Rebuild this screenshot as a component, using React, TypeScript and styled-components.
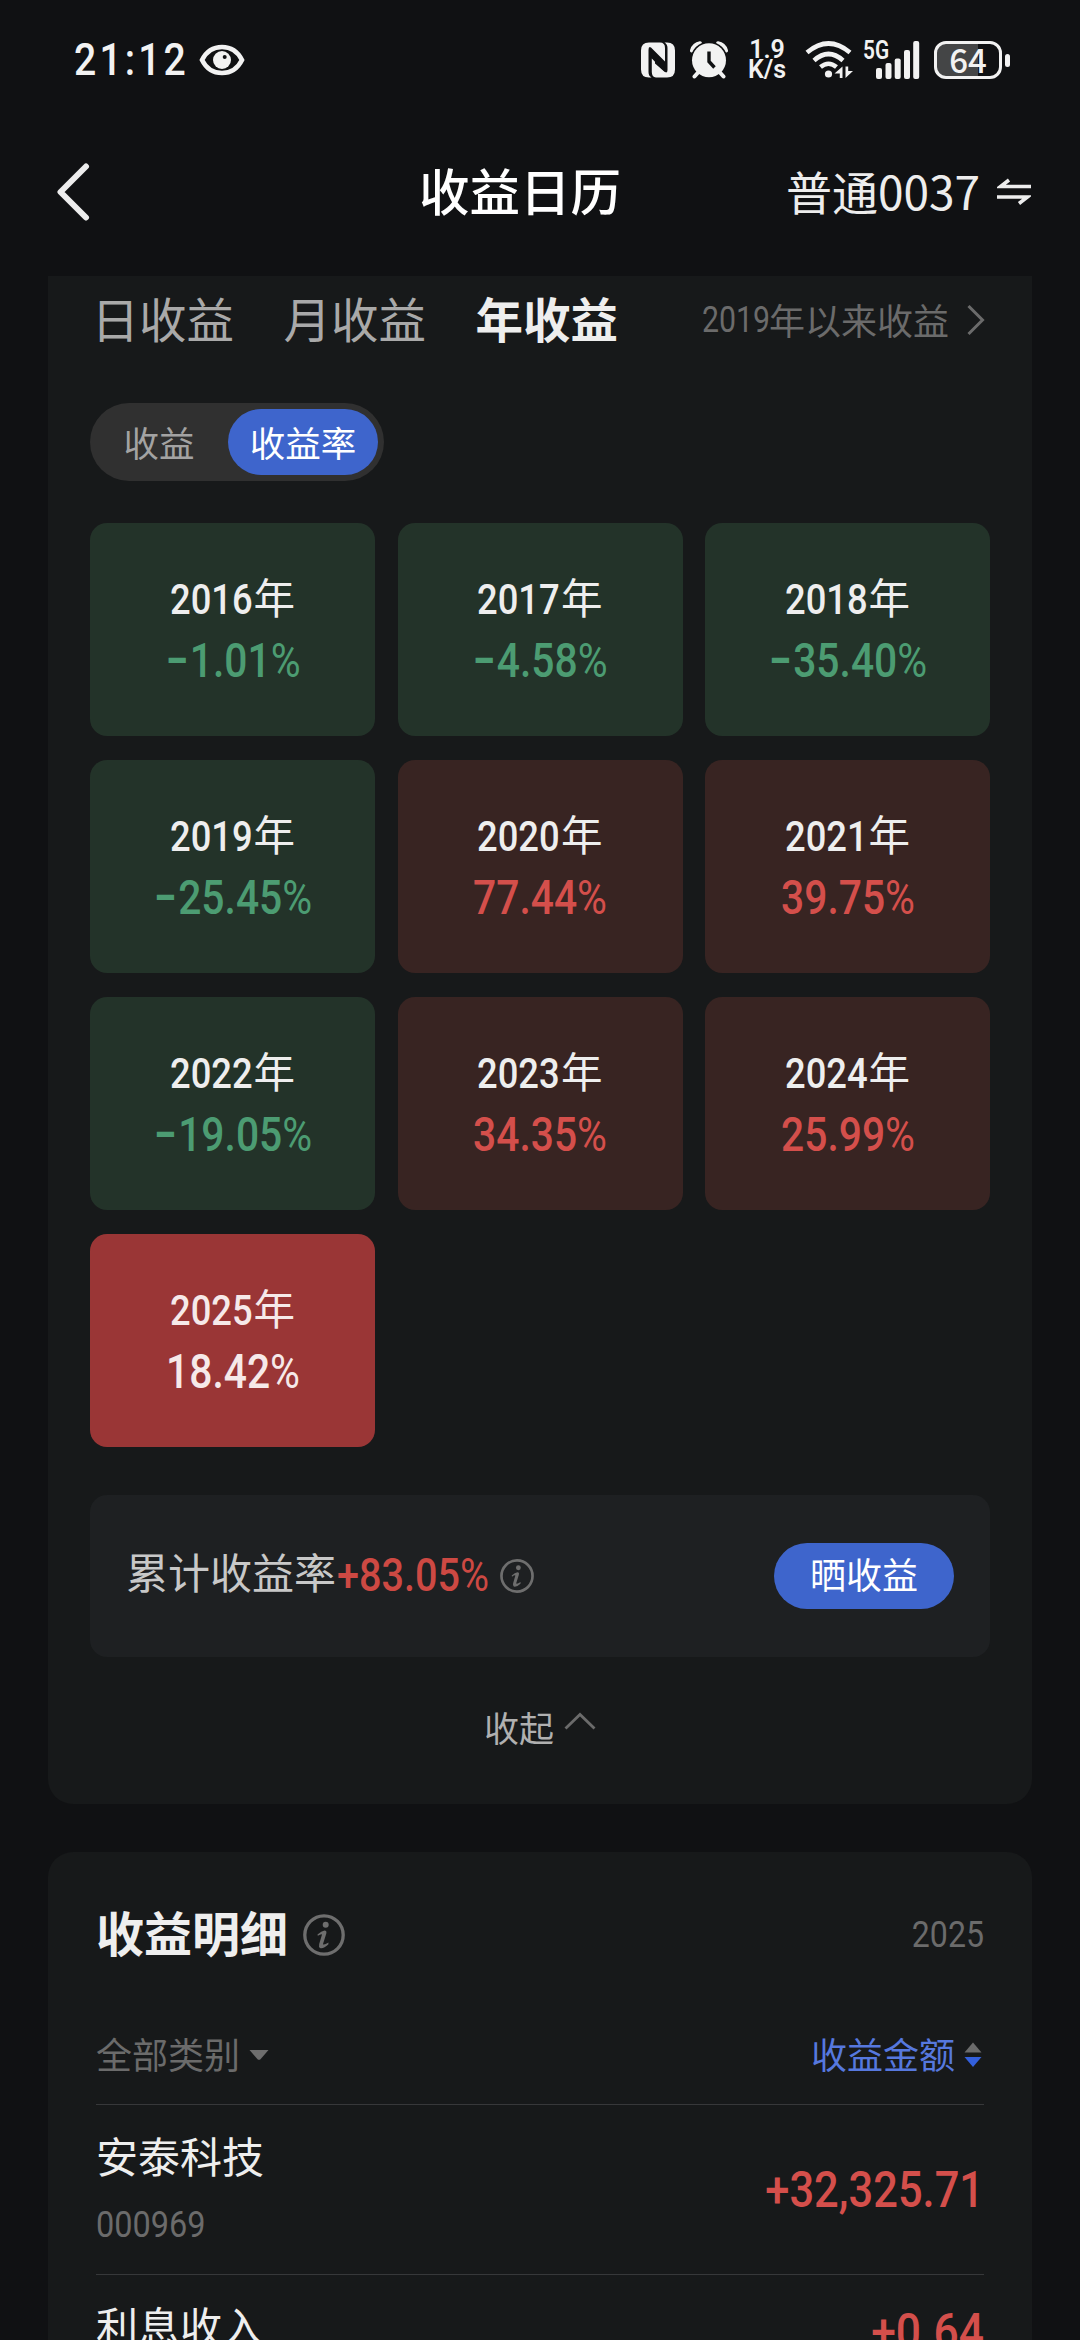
import React from "react";
import styled, { createGlobalStyle } from "styled-components";

const cjk = `"Noto Sans CJK SC", "Noto Sans", sans-serif`;
const numeric = `Roboto, "Noto Sans CJK SC", sans-serif`;

const GlobalStyle = createGlobalStyle`
  * { box-sizing: border-box; }
  html, body { margin: 0; padding: 0; background: #101113; }
  body { font-family: ${cjk}; color: #eee; }
  svg { display: block; flex: none; }
`;

const Screen = styled.div`
  width: 1080px;
  height: 2340px;
  overflow: hidden;
  background: #101113;
  display: flex;
  flex-direction: column;
`;

/* condensed numerals: glyphs are squeezed, the box keeps the final width */
const Num = styled.span<{ $size: number; $w: number; $scale?: number; $weight?: number; $from?: string }>`
  display: flex;
  flex: none;
  justify-content: ${(p) => (p.$from === "right" ? "flex-end" : p.$from === "center" ? "center" : "flex-start")};
  width: ${(p) => p.$w}px;
  height: 1.2em;
  line-height: 1.2;
  font-family: ${numeric};
  font-size: ${(p) => p.$size}px;
  font-weight: ${(p) => p.$weight ?? 500};
  white-space: nowrap;
  transform: scaleX(${(p) => p.$scale ?? 0.85});
  transform-origin: ${(p) => p.$from ?? "left"} center;
`;

const Thin = styled.span`
  font-weight: 400;
`;
const Minus = styled.span`
  font-weight: 700;
  margin-right: 2px;
`;

/* ---------- status bar ---------- */
const StatusBar = styled.div`
  height: 120px;
  flex: none;
  padding: 0 70px 0 74px;
  display: flex;
  align-items: center;
  color: #f2f2f2;
`;
const Time = styled.div`
  width: 125px;
  letter-spacing: 3.6px;
`;
const Tray = styled.div`
  margin-left: auto;
  display: flex;
  align-items: center;
`;
const AlarmSlot = styled.span`
  margin-left: 15px;
`;
const Speed = styled.div`
  width: 40px;
  margin: 0 18px 0 19px;
  font-family: ${numeric};
  font-size: 25px;
  font-weight: 600;
  line-height: 20px;
  text-align: center;
`;
const Cell = styled.div`
  position: relative;
  width: 58px;
  height: 38px;
  margin: 0 13px 0 10px;
`;
const Gen = styled.span`
  position: absolute;
  left: 0;
  top: -1px;
  font-family: ${numeric};
  font-size: 26px;
  line-height: 20px;
  font-weight: 600;
  transform: scaleX(0.8);
  transform-origin: left;
`;
const Battery = styled.div`
  width: 68px;
  height: 38px;
  border: 3px solid #f2f2f2;
  border-radius: 12px;
  background: linear-gradient(to right, #444546 41px, #101113 41px);
  display: flex;
  align-items: center;
  justify-content: center;
  font-size: 33px;
  line-height: 30px;
  padding-bottom: 2px;
  font-weight: 500;
`;
const BatteryTip = styled.div`
  width: 5px;
  height: 13px;
  margin-left: 3px;
  border-radius: 3px;
  background: #f2f2f2;
`;

/* ---------- header ---------- */
const Header = styled.header`
  height: 156px;
  flex: none;
  padding: 0 49px 12px 56px;
  display: grid;
  grid-template-columns: 363px 200px 1fr;
  align-items: center;
`;
const Title = styled.h1`
  margin: 0;
  padding-bottom: 7px;
  font-size: 50.5px;
  font-weight: 500;
  line-height: 60px;
  color: #fff;
  white-space: nowrap;
`;
const Account = styled.div`
  display: flex;
  align-items: center;
  justify-content: flex-end;
  gap: 17px;
  font-size: 46px;
  font-weight: 400;
  color: #ededed;
`;
const AccountName = styled.span`
  padding-bottom: 4px;
  line-height: 60px;
`;

/* ---------- cards ---------- */
const Card = styled.section<{ $first?: boolean }>`
  flex: none;
  width: 984px;
  margin: 0 48px;
  background: #17191a;
  border-radius: ${(p) => (p.$first ? "0 0 25px 25px" : "25px 25px 0 0")};
  height: ${(p) => (p.$first ? 1528 : 560)}px;
  margin-bottom: ${(p) => (p.$first ? 48 : 0)}px;
  padding: ${(p) => (p.$first ? "0 42px" : "0 48px")};
  display: flex;
  flex-direction: column;
`;

const Tabs = styled.nav`
  height: 87px;
  flex: none;
  display: flex;
  align-items: center;
  gap: 49.5px;
  padding-left: 1.5px;
`;
const Tab = styled.span<{ $active?: boolean }>`
  padding-bottom: 3px;
  font-size: 47.5px;
  line-height: 60px;
  font-weight: ${(p) => (p.$active ? 700 : 400)};
  color: ${(p) => (p.$active ? "#eeeeee" : "#a9a9a9")};
`;
const Since = styled.span`
  margin-left: auto;
  padding-right: 5px;
  display: flex;
  align-items: center;
  font-size: 36px;
  line-height: 50px;
  color: #6b6b6b;
`;
const SinceText = styled.span`
  margin-right: 17px;
  padding-bottom: 2px;
`;

const Segment = styled.div`
  width: 294px;
  height: 78px;
  flex: none;
  margin-top: 40px;
  border-radius: 39px;
  background: #303030;
  padding: 6px;
  display: flex;
`;
const SegmentItem = styled.span<{ $active?: boolean }>`
  width: ${(p) => (p.$active ? 150 : 132)}px;
  height: 66px;
  border-radius: 33px;
  display: flex;
  align-items: center;
  justify-content: center;
  font-size: 35.5px;
  line-height: 50px;
  padding-right: ${(p) => (p.$active ? 0 : 6)}px;
  background: ${(p) => (p.$active ? "#3e65cc" : "transparent")};
  color: ${(p) => (p.$active ? "#fff" : "#a3a3a3")};
`;

const YearGrid = styled.div`
  margin-top: 42px;
  display: grid;
  grid-template-columns: repeat(3, 285px);
  grid-auto-rows: 213px;
  gap: 24px 22.5px;
`;
type Tone = "down" | "up" | "current";
const tones: Record<Tone, { bg: string; label: string; value: string }> = {
  down: { bg: "#233329", label: "#eeeeee", value: "#4c9c72" },
  up: { bg: "#382422", label: "#eeeeee", value: "#d44f4b" },
  current: { bg: "#9a3636", label: "#f6e9e9", value: "#f6e9e9" },
};
const YearCell = styled.div<{ $tone: Tone }>`
  border-radius: 17px;
  background: ${(p) => tones[p.$tone].bg};
  color: ${(p) => tones[p.$tone].value};
  display: flex;
  flex-direction: column;
  align-items: center;
  padding-top: 45px;
`;
const YearLabel = styled.div<{ $tone: Tone }>`
  height: 64px;
  display: flex;
  align-items: center;
  font-size: 41.5px;
  line-height: 58px;
  color: ${(p) => tones[p.$tone].label};
`;
const YearUnit = styled.span`
  padding-bottom: 8px;
`;

const Summary = styled.div`
  margin-top: 48px;
  height: 162px;
  flex: none;
  border-radius: 17px;
  background: #1e2022;
  padding: 0 36px 0 36px;
  display: flex;
  align-items: center;
`;
const SummaryLabel = styled.span`
  font-size: 42px;
  line-height: 60px;
  color: #c8c8c8;
  padding-bottom: 10px;
`;
const SummaryValue = styled.span`
  color: #cd4943;
  margin: 0 10px 0 1px;
`;
const ShareButton = styled.button`
  margin-left: auto;
  width: 180px;
  height: 66px;
  border: 0;
  border-radius: 33px;
  background: #3e65cc;
  color: #fff;
  font-family: ${cjk};
  font-size: 36px;
  line-height: 50px;
  padding: 0 0 6px;
`;
const Collapse = styled.div`
  margin-top: 45px;
  height: 50px;
  padding-left: 394px;
  display: flex;
  font-size: 35px;
  line-height: 50px;
  color: #b0b0b0;
  gap: 10px;
`;
const CollapseMark = styled.span`
  padding-top: 10px;
`;

/* ---------- detail list ---------- */
const DetailHead = styled.div`
  height: 160px;
  flex: none;
  padding-top: 6px;
  display: flex;
  align-items: center;
  color: #6b6b6b;
`;
const DetailTitle = styled.h2`
  margin: 0 15px 0 0;
  padding-bottom: 8px;
  font-size: 48px;
  line-height: 60px;
  font-weight: 700;
  color: #eeeeee;
`;
const Push = styled.span`
  margin-left: auto;
`;
const Filters = styled.div`
  height: 93px;
  flex: none;
  padding-bottom: 6px;
  display: flex;
  align-items: center;
  justify-content: space-between;
  border-bottom: 1px solid #37383a;
`;
const Filter = styled.span<{ $active?: boolean }>`
  display: flex;
  align-items: center;
  gap: ${(p) => (p.$active ? 9 : 8)}px;
  padding-right: ${(p) => (p.$active ? 2 : 0)}px;
  font-size: 36px;
  line-height: 50px;
  color: ${(p) => (p.$active ? "#5678de" : "#6b6b6b")};
`;
const FilterText = styled.span`
  padding-bottom: 5px;
`;
const Item = styled.div`
  height: 170px;
  flex: none;
  border-bottom: 1px solid #37383a;
  display: flex;
  justify-content: space-between;
`;
const ItemName = styled.div`
  padding-top: 20px;
  font-size: 42px;
  line-height: 60px;
  color: #eeeeee;
`;
const ItemCode = styled.div`
  margin-top: 18px;
  color: #6b6b6b;
  line-height: 1;
`;
const ItemAmount = styled.div<{ $top: number }>`
  padding-top: ${(p) => p.$top}px;
  color: #d44f4b;
`;

const Eye = () => (
  <svg width="46" height="32" viewBox="0 0 46 32" fill="none">
    <path d="M3 16C7 8 14 3 23 3s16 5 20 13c-4 8-11 13-20 13S7 24 3 16Z" stroke="#f2f2f2" strokeWidth="4.6" />
    <circle cx="23" cy="16" r="9" fill="#f2f2f2" />
    <circle cx="25.7" cy="13" r="2" fill="#101113" />
  </svg>
);
const Nfc = () => (
  <svg width="34" height="36" viewBox="0 0 34 36">
    <path d="M8 0.5H19Q24 0.5 24 6V19.500L10 5.500Q7.500 4 7.500 8V30Q7.500 34 10.500 35.500H8Q0 35.500 0 27.500V8.500Q0 0.500 8 0.500Z" fill="#f2f2f2" />
    <path d="M23.500 0.500H26Q34 0.500 34 8.500V27.500Q34 35.500 26 35.500H15Q10.800 35 10.800 30V16.500L24 30Q26.500 31.500 26.500 28V6Q26.500 2 23.500 0.500Z" fill="#f2f2f2" />
    <path d="M10.800 8.500L20 16.500V21.500L10.800 13.500Z" fill="#101113" />
    <path d="M14 17.500L23.800 26V30L14 21.500Z" fill="#101113" />
  </svg>
);
const Alarm = () => (
  <svg width="38" height="38" viewBox="0 0 38 38" fill="none" stroke="#f2f2f2">
    <path d="M2 9.500Q4 3 10 2.200" strokeWidth="4" strokeLinecap="round" />
    <path d="M36 9.500Q34 3 28 2.200" strokeWidth="4" strokeLinecap="round" />
    <circle cx="19" cy="19.200" r="18.500" fill="#101113" stroke="none" />
    <path d="M8.500 31L4.500 35.500M29.500 31L33.500 35.500" strokeWidth="4" strokeLinecap="round" />
    <circle cx="19" cy="19.200" r="17" fill="#f2f2f2" stroke="none" />
    <path d="M19 10.500V20.500L24.500 26.500" stroke="#101113" strokeWidth="3.400" />
  </svg>
);
const Wifi = () => (
  <svg width="48" height="38" viewBox="0 0 48 38" fill="none" stroke="#f2f2f2" strokeWidth="4.600">
    <path d="M2 11.500Q23.500 -6.500 45 11.500" />
    <path d="M9 19.500Q23.500 6.500 38 19.500" />
    <path d="M15.500 26Q23.500 19.500 31.500 26" />
    <circle cx="23.500" cy="33" r="3.600" fill="#f2f2f2" stroke="none" />
    <path d="M37.500 25.500V37H34.800V32.500H29.500ZM40.500 37V25.500H43.200V30H48Z" fill="#f2f2f2" stroke="none" />
  </svg>
);
const Bars = () => (
  <svg width="58" height="38" viewBox="0 0 58 38" fill="#f2f2f2">
    <rect x="13" y="27" width="6" height="11" rx="2" />
    <rect x="22.500" y="22" width="6" height="16" rx="2" />
    <rect x="31.700" y="17.500" width="6" height="20.500" rx="2" />
    <rect x="41" y="9" width="6" height="29" rx="2" />
    <rect x="50.200" y="0" width="6" height="38" rx="2" />
  </svg>
);
const Back = () => (
  <svg width="34" height="60" viewBox="0 0 34 60" fill="none">
    <path d="M30 4.500L4.500 30L30 55.500" stroke="#ededed" strokeWidth="6" strokeLinecap="round" strokeLinejoin="round" />
  </svg>
);
const Swap = () => (
  <svg width="34" height="28" viewBox="0 0 34 28" fill="none" stroke="#ededed" strokeWidth="3.600">
    <path d="M34 8.500H3.500L12 2" />
    <path d="M0 19H30.500L22 25.500" />
  </svg>
);
const ChevronRight = () => (
  <svg width="19" height="32" viewBox="0 0 19 32" fill="none">
    <path d="M2.500 2L16.500 16L2.500 30" stroke="#6b6b6b" strokeWidth="3" />
  </svg>
);
const ChevronUp = () => (
  <svg width="32" height="18" viewBox="0 0 32 18" fill="none">
    <path d="M1.500 16.500L16 2.500L30.500 16.500" stroke="#6b6b6b" strokeWidth="2.800" />
  </svg>
);
const Info = ({ size }: { size: number }) => (
  <svg width={size} height={size} viewBox="0 0 42 42" fill="none">
    <circle cx="21" cy="21" r="19.200" stroke="#6e6e6e" strokeWidth="3.300" />
    <circle cx="22.700" cy="10.800" r="3" fill="#6e6e6e" />
    <path d="M14.500 20.500Q18.500 17 21.500 16.500Q24 16.500 23.300 19.500L20 30Q20.500 31.500 25.500 28.500L25.300 30.500Q20.500 35 17 34Q15.500 33 16.200 30L19 20.500Q18.500 19.500 14.800 21.800Z" fill="#6e6e6e" />
  </svg>
);
const Caret = () => (
  <svg width="22" height="12" viewBox="0 0 22 12">
    <path d="M1.500 1H20.500L12.500 10.200Q11 11.500 9.500 10.200Z" fill="#6e6e6e" />
  </svg>
);
const Sort = () => (
  <svg width="18" height="26" viewBox="0 0 18 26">
    <path d="M0.500 10.500L9 0.500L17.500 10.500Z" fill="#6b6b6b" />
    <path d="M0.500 15L9 25L17.500 15Z" fill="#3360dd" />
  </svg>
);

const years: { year: string; value: number; tone: Tone }[] = [
  { year: "2016", value: -1.01, tone: "down" },
  { year: "2017", value: -4.58, tone: "down" },
  { year: "2018", value: -35.4, tone: "down" },
  { year: "2019", value: -25.45, tone: "down" },
  { year: "2020", value: 77.44, tone: "up" },
  { year: "2021", value: 39.75, tone: "up" },
  { year: "2022", value: -19.05, tone: "down" },
  { year: "2023", value: 34.35, tone: "up" },
  { year: "2024", value: 25.99, tone: "up" },
  { year: "2025", value: 18.42, tone: "current" },
];

export default function App() {
  return (
    <Screen>
      <GlobalStyle />
      <StatusBar>
        <Time>
          <Num $size={45} $w={120} $scale={0.87}>21:12</Num>
        </Time>
        <Eye />
        <Tray>
          <Nfc />
          <AlarmSlot>
            <Alarm />
          </AlarmSlot>
          <Speed>
            1.9
            <br />
            K/s
          </Speed>
          <Wifi />
          <Cell>
            <Gen>5G</Gen>
            <Bars />
          </Cell>
          <Battery>64</Battery>
          <BatteryTip />
        </Tray>
      </StatusBar>

      <Header>
        <Back />
        <Title>收益日历</Title>
        <Account>
          <AccountName>普通0037</AccountName>
          <Swap />
        </Account>
      </Header>

      <Card $first>
        <Tabs>
          <Tab>日收益</Tab>
          <Tab>月收益</Tab>
          <Tab $active>年收益</Tab>
          <Since>
            <Num $size={36.5} $w={67} $scale={0.83} $weight={400}>2019</Num>
            <SinceText>年以来收益</SinceText>
            <ChevronRight />
          </Since>
        </Tabs>

        <Segment>
          <SegmentItem>收益</SegmentItem>
          <SegmentItem $active>收益率</SegmentItem>
        </Segment>

        <YearGrid>
          {years.map((y) => (
            <YearCell key={y.year} $tone={y.tone}>
              <YearLabel $tone={y.tone}>
                <Num $size={42} $w={83.5} $scale={0.865}>{y.year}</Num>
                <YearUnit>年</YearUnit>
              </YearLabel>
              <Num $size={48} $w={200} $scale={0.85} $from="center">
                {y.value < 0 && <Minus>−</Minus>}
                {Math.abs(y.value).toFixed(2)}
                <Thin>%</Thin>
              </Num>
            </YearCell>
          ))}
        </YearGrid>

        <Summary>
          <SummaryLabel>累计收益率</SummaryLabel>
          <SummaryValue>
            <Num $size={45.5} $w={153} $scale={0.87}>
              +83.05<Thin>%</Thin>
            </Num>
          </SummaryValue>
          <Info size={34} />
          <ShareButton>晒收益</ShareButton>
        </Summary>

        <Collapse>
          收起
          <CollapseMark>
            <ChevronUp />
          </CollapseMark>
        </Collapse>
      </Card>

      <Card>
        <DetailHead>
          <DetailTitle>收益明细</DetailTitle>
          <Info size={42} />
          <Push>
            <Num $size={36.5} $w={72} $scale={0.88} $weight={400} $from="right">2025</Num>
          </Push>
        </DetailHead>
        <Filters>
          <Filter>
            <FilterText>全部类别</FilterText>
            <Caret />
          </Filter>
          <Filter $active>
            <FilterText>收益金额</FilterText>
            <Sort />
          </Filter>
        </Filters>
        <Item>
          <ItemName>
            安泰科技
            <ItemCode>
              <Num $size={36.5} $w={110} $scale={0.89} $weight={400}>000969</Num>
            </ItemCode>
          </ItemName>
          <ItemAmount $top={55}>
            <Num $size={50.5} $w={220} $scale={0.86} $from="right">+32,325.71</Num>
          </ItemAmount>
        </Item>
        <Item>
          <ItemName>利息收入</ItemName>
          <ItemAmount $top={27}>
            <Num $size={50.5} $w={220} $scale={0.88} $from="right">+0.64</Num>
          </ItemAmount>
        </Item>
      </Card>
    </Screen>
  );
}
